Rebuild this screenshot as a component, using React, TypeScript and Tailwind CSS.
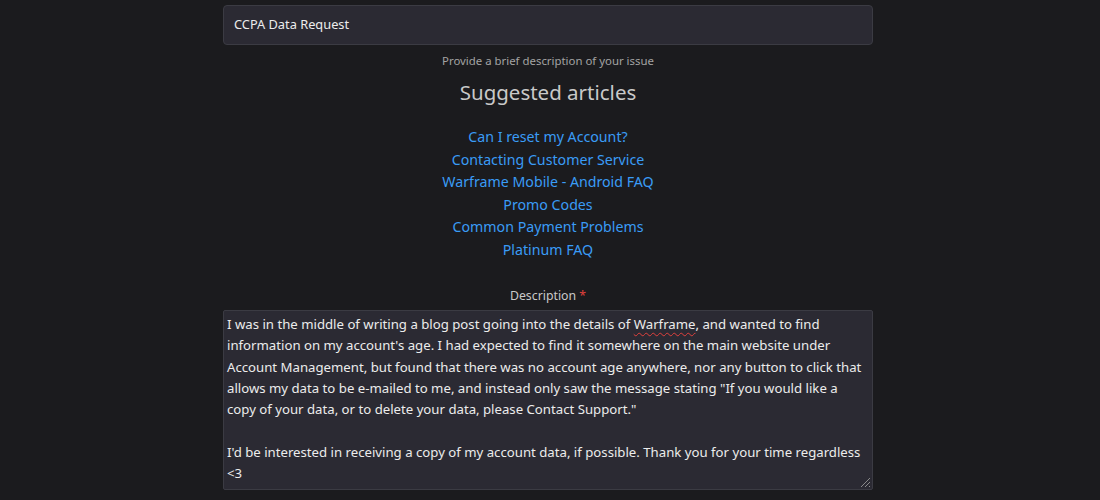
import React from "react";

const ARTICLES: string[] = [
  "Can I reset my Account?",
  "Contacting Customer Service",
  "Warframe Mobile - Android FAQ",
  "Promo Codes",
  "Common Payment Problems",
  "Platinum FAQ",
];

export default function App() {
  return (
    <div
      className="min-h-[500px] w-full bg-[#1b1b1e] text-[#e6e6e6]"
      style={{ fontFamily: '"Noto Sans", "Open Sans", sans-serif' }}
    >
      <div className="mx-auto flex w-[654px] flex-col pr-[4px] pt-[5px]">
        {/* subject */}
        <div className="flex h-[40px] items-center rounded-[4px] border border-[#3b3b43] bg-[#2b2a33] px-[10px] text-[12.8px] text-[#ececec]">
          CCPA Data Request
        </div>
        <p className="mt-[8px] text-center text-[11.4px] leading-[16px] text-[#a3a3a3]">
          Provide a brief description of your issue
        </p>

        {/* suggested */}
        <h2 className="mt-[8px] text-center text-[20.5px] leading-[30px] text-[#c9c9c9]">
          Suggested articles
        </h2>
        <ul className="mt-[19px] flex flex-col items-center text-[14.2px] leading-[22.5px]">
          {ARTICLES.map((a) => (
            <li key={a}>
              <a href="#" className="text-[#3a9cf6] hover:underline">
                {a}
              </a>
            </li>
          ))}
        </ul>

        {/* description */}
        <label className="mt-[26px] text-center text-[12.3px] leading-[18px] text-[#c9c9c9]">
          Description <span className="text-[#e0403c]">*</span>
        </label>
        <div className="relative mt-[5px] h-[180px] rounded-[2px] border border-[#3b3b43] bg-[#2b2a33] px-[3px] pt-[3px] text-[13.2px] leading-[21.3px] whitespace-pre-wrap text-[#ececec]">
          I was in the middle of writing a blog post going into the details of{" "}
          <span className="underline decoration-[#e0403c] decoration-wavy decoration-1 underline-offset-[3px]">
            Warframe
          </span>
          , and wanted to find information on my account's age. I had expected to find it somewhere on the main website under Account Management, but found that there was no account age anywhere, nor any button to click that allows my data to be e-mailed to me, and instead only saw the message stating "If you would like a copy of your data, or to delete your data, please Contact Support."
          {"\n\n"}I'd be interested in receiving a copy of my account data, if possible. Thank you for your time regardless {"<3"}
          <svg
            className="absolute bottom-[1px] right-[1px]"
            width="12"
            height="12"
            viewBox="0 0 12 12"
          >
            <path d="M11 2 L2 11 M11 6 L6 11 M11 10 L10 11" stroke="#8a8a8a" strokeWidth="1" />
          </svg>
        </div>
      </div>
    </div>
  );
}
